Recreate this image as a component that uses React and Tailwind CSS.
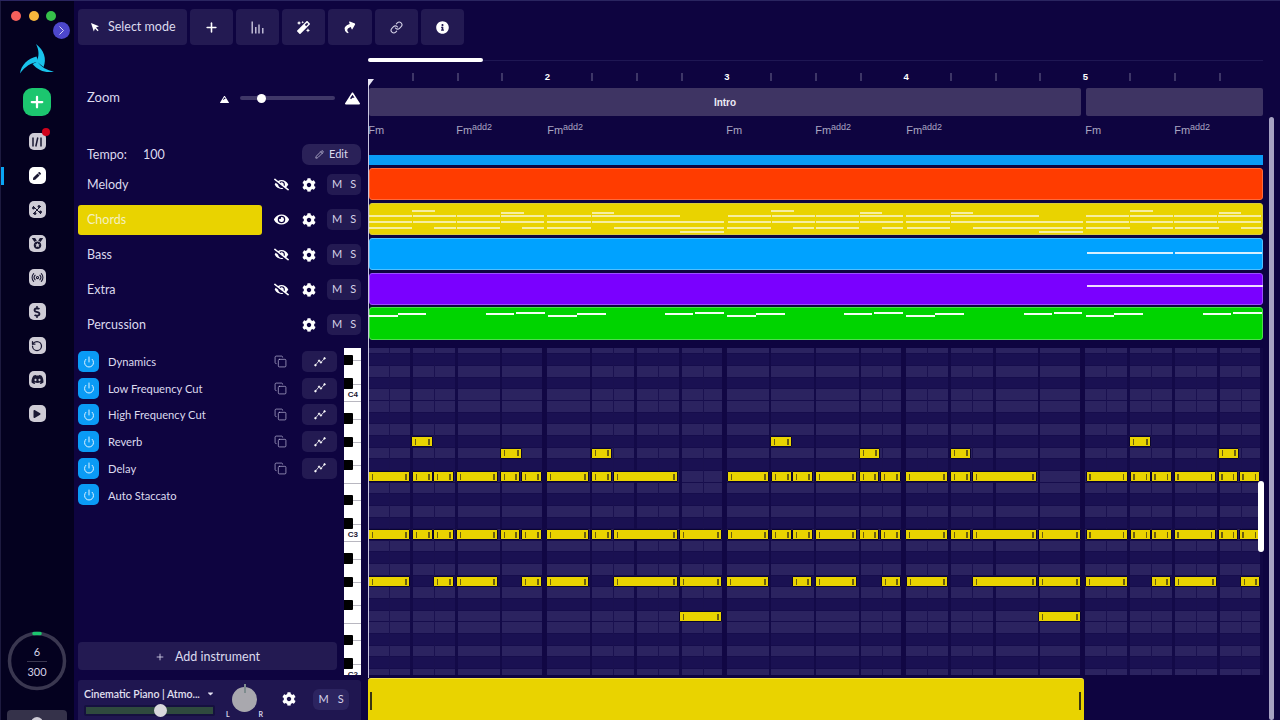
import React from "react";
import { Plus, Pencil, Power, Copy, Link, Radio, RotateCcw } from "lucide-react";
import { FaCog, FaEye, FaEyeSlash, FaMagic, FaShare, FaInfoCircle, FaMountain, FaDollarSign, FaDiscord, FaPlay, FaMedal, FaPen, FaCaretDown } from "react-icons/fa";

const O = 368.3;
const PITCH = 11.667;
const BLACK = [1, 3, 6, 8, 10, 13, 15, 18, 20, 22, 25, 27];
const ROWS = 29;

const barA = [[369, 410], [413, 433], [434, 454], [457, 498], [501, 520], [522, 542]];
const barB = [[547, 589], [592, 612], [614, 678]];
const P = 358.66;
const rep = (a) => [...a, ...a.map(([s, e]) => [s + P, e + P]), ...a.map(([s, e]) => [s + 2 * P, e + 2 * P])];
const NOTES = [
  { row: 8, lane: 8, spans: [[412, 433], [771, 792], [1130, 1151]] },
  { row: 9, lane: 10, spans: [[501, 522], [592, 612], [860, 880], [951, 971], [1219, 1239]] },
  { row: 11, lane: 12.5, spans: [...rep(barA), ...rep(barB).filter(([s]) => s < 1000)] },
  { row: 16, lane: 19, spans: [...rep(barA), ...rep(barB).filter(([s]) => s < 1000), [680, 722], [1039, 1081]] },
  {
    row: 20, lane: 24.5,
    spans: [[369, 410], [434, 454], [457, 498], [522, 542], [547, 589], [614, 678], [680, 722], [727, 769], [793, 812], [816, 857], [882, 901], [907, 948], [973, 1037], [1039, 1081], [1086, 1128], [1152, 1171], [1175, 1217], [1241, 1260]],
  },
  { row: 23, lane: 29, spans: [[680, 722], [1039, 1081]] },
];
const GREEN = [
  [369, 398, 9], [398, 426, 6.5], [486, 514, 6.5], [516, 545, 6], [548, 577, 9], [577, 606, 6.5], [665, 693, 6.5], [695, 724, 6],
  [727, 756, 9], [756, 785, 6.5], [844, 872, 6.5], [874, 903, 6], [906, 935, 9], [935, 964, 6.5], [1024, 1052, 6.5], [1054, 1082, 6],
  [1086, 1114, 9], [1114, 1143, 6.5], [1203, 1231, 6.5], [1233, 1262, 6],
];
const CHORDS = [[369, 0], [457, 1], [548, 1], [727, 0], [816, 1], [907, 1], [1086, 0], [1175, 1]];

const TRACKS = [
  { name: "Melody", icon: "off" },
  { name: "Chords", icon: "on", active: true },
  { name: "Bass", icon: "off" },
  { name: "Extra", icon: "off" },
  { name: "Percussion", icon: null },
];
const EFFECTS = ["Dynamics", "Low Frequency Cut", "High Frequency Cut", "Reverb", "Delay", "Auto Staccato"];

function Bars() {
  return (
    <svg width="13" height="13" viewBox="0 0 13 13" stroke="#d6d3e8" strokeWidth="1.3">
      <path d="M1.2 0.5V12.5M4.8 6V12.5M8 3.5V12.5M11.8 7V12.5" />
    </svg>
  );
}
function Cursor() {
  return (
    <svg width="10" height="10" viewBox="0 0 10 10" fill="#fff">
      <path d="M1 1L9 4.2L6 5.6L8.6 8.2L7.6 9.2L5 6.6L3.8 9.4Z" />
    </svg>
  );
}
function Curve() {
  return (
    <svg width="12" height="10" viewBox="0 0 13 11" fill="#fff" stroke="#fff" strokeWidth="0.8">
      <path d="M1.5 9L5.5 4L7.5 6L11.5 1.5" fill="none" />
      <circle cx="1.5" cy="9" r="0.9" />
      <circle cx="5.5" cy="4" r="0.8" />
      <circle cx="7.5" cy="6" r="0.8" />
      <circle cx="11.5" cy="1.5" r="0.9" />
    </svg>
  );
}
function Logo() {
  return (
    <svg width="60" height="50" viewBox="0 0 60 50" fill="#19c3ec" className="ml-[6px]">
      <path d="M26 9C34 15 37 24 33.500 32L26.500 26.500C29.500 21 29 15 26 9Z" />
      <path d="M10 38.500C11 30 18 23.500 26.500 21.500L28.500 27C21 27.500 15 31.500 10 38.500Z" />
      <path d="M44 36.500C36 38.500 28 35.500 22.500 29L27.500 26.500C31 32 37 35.500 44 36.500Z" />
    </svg>
  );
}
function SideI({ children, active, dot }) {
  return (
    <div className={`relative flex h-[17px] w-[17px] items-center justify-center rounded-[5px] text-[#1a1833] ${active ? "bg-white" : "bg-[#cfccd6]"}`}>
      {children}
      {dot && <span className="absolute -top-[5px] -right-[4px] h-[8px] w-[8px] rounded-full bg-[#d0021b]" />}
      {active && <span className="absolute left-[-28px] top-[0px] h-[18px] w-[3px] bg-[#0aa5f5]" />}
    </div>
  );
}
function MS() {
  return (
    <div className="flex h-[21px] w-[34px] items-center justify-center gap-[8px] rounded-[5px] bg-[#231a52] text-[11px] text-[#d6d3e8]">
      <span>M</span>
      <span>S</span>
    </div>
  );
}
function ToolBtn({ w, children }) {
  return <div className={`flex h-[36px] ${w} items-center justify-center rounded-[4px] bg-[#231a52] text-white`}>{children}</div>;
}

function Sidebar() {
  return (
    <aside className="relative flex h-full w-[74px] shrink-0 flex-col items-center bg-[#04011f]">
      <span className="absolute bottom-0 left-0 top-0 w-px bg-[#1d1a3f]" />
      <div className="flex w-full gap-[7.500px] pl-[11px] pt-[11px]">
        <span className="h-[10px] w-[10px] rounded-full bg-[#f4605c]" />
        <span className="h-[10px] w-[10px] rounded-full bg-[#f6b73c]" />
        <span className="h-[10px] w-[10px] rounded-full bg-[#36c04a]" />
      </div>
      <div className="absolute left-[52.500px] top-[22px] flex h-[17px] w-[17px] items-center justify-center rounded-full bg-[#4d47cc]">
        <svg width="7" height="9" viewBox="0 0 7 9" fill="none" stroke="#d8d6f5" strokeWidth="1"><path d="M1.500 0.500L5.500 4.500L1.500 8.500" /></svg>
      </div>
      <div className="mt-[14px]"><Logo /></div>
      <div className="mt-[3px] flex h-[28px] w-[28px] items-center justify-center rounded-[9px] bg-[#1cc66f]">
        <Plus size={18} strokeWidth={3} color="#fff" />
      </div>
      <div className="mt-[17px] flex flex-col gap-[17px]">
        <SideI dot>
          <svg width="12" height="12" viewBox="0 0 12 12" stroke="#1a1833" strokeWidth="1.500"><path d="M2 1.500V10.500M6.800 1.500L4.800 10.500M10 1.500V10.500" /></svg>
        </SideI>
        <SideI active><FaPen size={8} /></SideI>
        <SideI>
          <svg width="12" height="12" viewBox="0 0 12 12" fill="#1a1833" stroke="#1a1833" strokeWidth="1">
            <path d="M2 2L10 10M10 2L2 10" />
            <circle cx="2.500" cy="4" r="1" /><circle cx="8" cy="2.500" r="1" /><circle cx="9.500" cy="8" r="1" /><circle cx="4" cy="9.500" r="1" />
          </svg>
        </SideI>
        <SideI><FaMedal size={11} /></SideI>
        <SideI><Radio size={13} strokeWidth={2} /></SideI>
        <SideI><FaDollarSign size={12} /></SideI>
        <SideI><RotateCcw size={12} strokeWidth={2.500} /></SideI>
        <SideI><FaDiscord size={13} /></SideI>
        <SideI><FaPlay size={8} /></SideI>
      </div>
      <div className="relative mb-[19px] mt-auto h-[60px] w-[60px]">
        <svg width="60" height="60" viewBox="0 0 60 60" fill="none">
          <circle cx="30" cy="30" r="27.500" stroke="#3a3750" strokeWidth="3.500" />
          <path d="M27 2.600A27.500 27.500 0 0 1 33 2.600" stroke="#1cc66f" strokeWidth="3.500" strokeLinecap="round" />
        </svg>
        <div className="absolute inset-0 flex flex-col items-center justify-center text-[11px] leading-[13px] text-[#d6d3e8]">
          <span>6</span>
          <span className="my-[3px] h-px w-[20px] bg-[#3a3750]" />
          <span>300</span>
        </div>
      </div>
      <div className="relative h-[10px] w-[60px] overflow-hidden rounded-t-[4px] bg-[#35324a]">
        <span className="absolute left-[24px] top-[7px] h-[12px] w-[12px] rounded-full bg-[#cfccd6]" />
      </div>
    </aside>
  );
}

function Toolbar() {
  return (
    <div className="flex h-[54px] shrink-0 gap-[3px] pl-[4px] pt-[9px]">
      <div className="flex h-[36px] w-[109px] items-center gap-[8px] rounded-[4px] bg-[#231a52] pl-[12px] text-[12.500px] text-[#dcdaee]">
        <Cursor />
        <span className="pt-[1px]">Select mode</span>
      </div>
      <ToolBtn w="w-[43px]"><Plus size={15} strokeWidth={2.500} /></ToolBtn>
      <ToolBtn w="w-[43px]"><Bars /></ToolBtn>
      <ToolBtn w="w-[43px]"><FaMagic size={13} /></ToolBtn>
      <ToolBtn w="w-[44px]"><FaShare size={12} className="-rotate-[20deg]" /></ToolBtn>
      <ToolBtn w="w-[43px]"><Link size={13} strokeWidth={2} color="#d6d3e8" /></ToolBtn>
      <ToolBtn w="w-[43px]"><FaInfoCircle size={13} /></ToolBtn>
    </div>
  );
}

function LeftUpper() {
  return (
    <div className="flex w-[294px] shrink-0 flex-col pl-[4px] text-[#dcdaee]">
      <div className="mt-[34px] flex h-[20px] items-center pl-[9px]">
        <span className="w-[31px] shrink-0 text-[13px]">Zoom</span>
        <FaMountain size={9} color="#fff" className="ml-[102px] mt-[3px] shrink-0" />
        <div className="relative ml-[11px] h-[4px] w-[95px] shrink-0 rounded-full bg-[#3f3768]">
          <span className="absolute left-[17px] top-[-2.500px] h-[9px] w-[9px] rounded-full bg-white" />
        </div>
        <FaMountain size={15} color="#fff" className="ml-[10px] shrink-0" />
      </div>
      <div className="mt-[36px] flex h-[21px] items-center pl-[9px] text-[12.500px]">
        <span className="w-[40px] shrink-0 pt-[1px]">Tempo:</span>
        <span className="ml-[16px] w-[22px] shrink-0 pt-[1px]">100</span>
        <div className="ml-[137px] flex h-[21px] w-[59px] shrink-0 items-center justify-center gap-[5px] rounded-[7px] bg-[#2a2158] text-[11px]">
          <Pencil size={9} strokeWidth={1.800} />
          <span>Edit</span>
        </div>
      </div>
      <div className="mt-[2px] flex flex-col">
        {TRACKS.map((t) => (
          <div key={t.name} className="flex h-[35px] w-[283px] items-center">
            <div className={`flex h-[30px] w-[184px] items-center rounded-[3px] pl-[9px] pt-[2px] text-[12.500px] ${t.active ? "bg-[#e9d300] text-[#f4f0c0]" : ""}`}>{t.name}</div>
            <div className="flex w-[38px] justify-center text-white">
              {t.icon === "off" && <FaEyeSlash size={15} />}
              {t.icon === "on" && <FaEye size={15} />}
            </div>
            <div className="flex w-[18px] justify-center text-white"><FaCog size={14} /></div>
            <div className="ml-[9px]"><MS /></div>
          </div>
        ))}
      </div>
    </div>
  );
}

function Timeline() {
  return (
    <div className="flex flex-1 flex-col pt-[4px]">
      <div className="relative h-[4px] w-[895px]">
        <div className="absolute left-0 right-0 top-[1.500px] h-px bg-[#1f1753]" />
        <div className="absolute left-0 top-0 h-[4px] w-[115px] rounded-full bg-white" />
      </div>
      <div className="mt-[4px] flex h-[22px] w-[895px] items-center overflow-hidden">
        {Array.from({ length: 20 }, (_, i) => (
          <div key={i} className="flex h-[9px] w-[44.830px] shrink-0 -translate-x-[0.500px] items-center">
            {i % 4 === 0 ? (
              i > 0 && <span className="-translate-x-[2px] font-['Liberation_Sans',sans-serif] text-[9.500px] font-bold leading-none text-white">{i / 4 + 1}</span>
            ) : (
              <span className="h-[8px] w-px bg-[#6d688e]" />
            )}
          </div>
        ))}
      </div>
      <div className="flex h-[28px] gap-[5px] pl-[1px]">
        <div className="flex w-[712px] items-center justify-center rounded-[2px] bg-[#3e3463] font-['Liberation_Sans',sans-serif] text-[10px] font-bold text-[#ecebf5]">Intro</div>
        <div className="w-[177px] rounded-[2px] bg-[#3e3463]" />
      </div>
      <div className="relative mt-[4px] h-[20px] font-['Liberation_Sans',sans-serif] text-[11px] text-[#aaa7c2]">
        {CHORDS.map(([x, add], i) => (
          <span key={i} className="absolute top-[3px] whitespace-nowrap leading-[14px]" style={{ left: x - O - 0.5 }}>
            Fm{add ? <sup className="text-[9px] leading-none">add2</sup> : null}
          </span>
        ))}
      </div>
      <div className="mt-[15px] flex w-[895px] flex-col gap-[3px] pl-[1px]">
        <div className="h-[10px] bg-[#0a9bf5]" />
        <div className="h-[32px] rounded-[3px] border border-[#ff6a3c] bg-[#ff3c00]" />
        <div className="relative h-[32px] rounded-[3px] border border-[#d9cc3c] bg-[#e9d300]">
          {NOTES.map((n) =>
            n.spans.map(([s, e], i) => (
              <span key={n.row + "-" + i} className="absolute h-[2px] bg-[#f6eea0]" style={{ left: s - 370, width: e - s + 2, top: n.lane - 2 }} />
            ))
          )}
        </div>
        <div className="relative h-[32px] rounded-[3px] border border-[#4fc0ff] bg-[#00a2ff]">
          <span className="absolute top-[12.500px] h-[2px] w-[86px] bg-[#d6f0ff]" style={{ left: 1087 - 370 }} />
          <span className="absolute top-[12.500px] h-[2px] w-[87px] bg-[#d6f0ff]" style={{ left: 1175 - 370 }} />
        </div>
        <div className="relative h-[32px] rounded-[3px] border border-[#9a4fff] bg-[#7a00ff]">
          <span className="absolute top-[11px] h-[1.500px] w-[176px] bg-[#f0dcff]" style={{ left: 1087 - 370 }} />
        </div>
        <div className="relative -mt-[1px] h-[33px] rounded-[3px] border border-[#4fdc4f] bg-[#00d400]">
          {GREEN.map(([s, e, y], i) => (
            <span key={i} className="absolute h-[2px] bg-[#f2fff2]" style={{ left: s - 370, width: e - s, top: y - 2 }} />
          ))}
        </div>
      </div>
    </div>
  );
}

function Effects() {
  return (
    <div className="flex w-[270px] shrink-0 flex-col pl-[4px] pt-[6px] text-[#dcdaee]">
      <div className="flex flex-col gap-[5.700px]">
        {EFFECTS.map((e, i) => (
          <div key={e} className="flex h-[21px] w-[259px] items-center">
            <div className="flex h-[21px] w-[21px] items-center justify-center rounded-[5px] bg-[#0a9bf5]">
              <Power size={12} strokeWidth={2} color="#dff3ff" />
            </div>
            <span className="ml-[9px] pt-[2px] text-[11.200px]">{e}</span>
            {i < 5 && (
              <>
                <Copy size={13} strokeWidth={1.300} color="#b9b5d6" className="ml-auto" />
                <div className="ml-[15px] flex h-[21px] w-[35px] items-center justify-center rounded-[5px] bg-[#231a52]"><Curve /></div>
              </>
            )}
          </div>
        ))}
      </div>
      <div className="mb-[8px] mt-auto flex h-[28px] w-[259px] items-center justify-center gap-[10px] rounded-[4px] bg-[#231a52] pt-[2px] text-[12.500px]">
        <Plus size={10} strokeWidth={2} />
        <span>Add instrument</span>
      </div>
    </div>
  );
}

function Piano() {
  const bounds = [5, 12, 17, 24];
  return (
    <div className="relative mt-[3px] h-[327px] w-[17px] shrink-0 overflow-hidden bg-white">
      {BLACK.map((r) => (
        <span key={"l" + r} className="absolute left-0 right-0 h-px bg-[#b8b7c0]" style={{ top: (r + 0.5) * PITCH - 5.33 }} />
      ))}
      {bounds.map((r) => (
        <span key={"b" + r} className="absolute left-0 right-0 h-px bg-[#b8b7c0]" style={{ top: r * PITCH - 5.33 }} />
      ))}
      {BLACK.map((r) => (
        <span key={r} className="absolute left-0 h-[10.500px] w-[9px] rounded-r-[1px] bg-black" style={{ top: r * PITCH - 5.33 + 0.6 }} />
      ))}
      {[["C4", 4], ["C3", 16], ["C2", 28]].map(([t, r]) => (
        <span key={t} className="absolute right-[3px] font-['Liberation_Sans',sans-serif] text-[8px] font-bold leading-[11px] text-[#1a1833]" style={{ top: r * PITCH - 5.33 }}>{t}</span>
      ))}
    </div>
  );
}

function Note({ s, e, row }) {
  return (
    <div className="absolute flex h-[11px] items-center justify-between rounded-[1px] border border-[#0a0530] bg-[#e9d300] px-[2.500px]" style={{ left: s - O - 0.5, width: e - s + 1, top: row * PITCH - 5.33 }}>
      <span className="h-[6px] w-[1.500px] bg-[#6b5f10]" />
      <span className="h-[6px] w-[1.500px] bg-[#6b5f10]" />
    </div>
  );
}

function Roll() {
  return (
    <div className="relative ml-[7.300px] mt-[3px] h-[327px] w-[895px] shrink-0 overflow-hidden bg-[#130a48]">
      <div className="-mt-[5.330px] flex flex-col">
        {Array.from({ length: ROWS }, (_, i) => (
          <div key={i} className={`h-[11.667px] shrink-0 border-b border-[#160d4c] ${BLACK.includes(i) ? "bg-[#1a1152]" : "bg-[#2b2360]"}`} />
        ))}
      </div>
      <div className="absolute inset-0 bg-[repeating-linear-gradient(90deg,transparent_0,transparent_21.2px,#1a1150_21.2px,#1a1150_21.8px,transparent_21.8px,transparent_42.2px,#130a48_42.2px,#130a48_44.83px)]" />
      <div className="absolute inset-0 bg-[repeating-linear-gradient(90deg,transparent_0,transparent_174.3px,#110744_174.3px,#110744_179.33px)]" />
      {NOTES.map((n) => n.spans.map(([s, e], i) => <Note key={n.row + "-" + i} s={s} e={e} row={n.row} />))}
    </div>
  );
}

function Bottom() {
  return (
    <div className="flex h-[42px] shrink-0 pl-[4px]">
      <div className="mt-[2px] flex h-[40px] w-[283px] items-center rounded-t-[3px] bg-[#1f1650] pb-[2px] pl-[6px]">
        <div className="mt-[4px] flex w-[131px] shrink-0 flex-col">
          <div className="flex items-center text-[10.500px] font-semibold leading-[14px] text-[#e3e1f2]">
            <span className="whitespace-nowrap">Cinematic Piano | Atmo...</span>
            <FaCaretDown size={9} className="ml-[6px]" />
          </div>
          <div className="relative mt-[4px] h-[11px] w-[131px] rounded-[2px] bg-[#15103f] p-[2px]">
            <div className="h-full w-full bg-[#2f4a3e]" />
            <span className="absolute left-[70px] top-[-1px] h-[13px] w-[13px] rounded-full bg-[#d8d8dc]" />
          </div>
        </div>
        <div className="relative ml-[17px] h-[25px] w-[25px] shrink-0 rounded-full bg-[#a9a8ae]">
          <span className="absolute left-[11.500px] top-[-3px] h-[9px] w-[2px] bg-[#7e8c8e]" />
          <span className="absolute left-[-6px] top-[22px] text-[7px] font-bold text-[#d6d3e8]">L</span>
          <span className="absolute right-[-6px] top-[22px] text-[7px] font-bold text-[#d6d3e8]">R</span>
        </div>
        <FaCog size={14} color="#fff" className="ml-[25px] shrink-0" />
        <div className="ml-[17px] flex h-[21px] w-[36px] items-center justify-center gap-[9px] rounded-[6px] bg-[#2c2460] text-[11px] text-[#d6d3e8]"><span>M</span><span>S</span></div>
      </div>
      <div className="relative ml-[7px] h-[42px] w-[716px] rounded-t-[3px] border-t border-[#f3e34a] bg-[#e9d300]">
        <span className="absolute left-[2px] top-[13px] h-[18px] w-[2px] bg-[#3a3510]" />
        <span className="absolute right-[3px] top-[13px] h-[18px] w-[2px] bg-[#3a3510]" />
      </div>
    </div>
  );
}

export default function App() {
  return (
    <div className="relative flex h-[720px] w-[1280px] overflow-hidden bg-[#0e0440] font-['Lato',sans-serif]">
      <Sidebar />
      <main className="flex h-full flex-1 flex-col">
        <Toolbar />
        <div className="flex h-[291px] shrink-0">
          <LeftUpper />
          <Timeline />
        </div>
        <div className="flex h-[333px] shrink-0">
          <Effects />
          <Piano />
          <Roll />
        </div>
        <Bottom />
      </main>
      <span className="absolute left-0 right-0 top-0 h-px bg-[#2a2560]" />
      <span className="absolute left-[367.500px] top-[80px] h-[598px] w-[1.500px] bg-[#c8c5e0]" />
      <svg className="absolute left-[368px] top-[79px]" width="7" height="9" viewBox="0 0 7 9" fill="#e8e6f4"><path d="M0 0H6L0 8Z" /></svg>
      <span className="absolute left-[1258px] top-[481px] h-[71px] w-[6px] rounded-full bg-white" />
      <span className="absolute left-[1269px] top-[117px] h-[603px] w-[5px] rounded-full bg-[#a6a2c2]" />
    </div>
  );
}
